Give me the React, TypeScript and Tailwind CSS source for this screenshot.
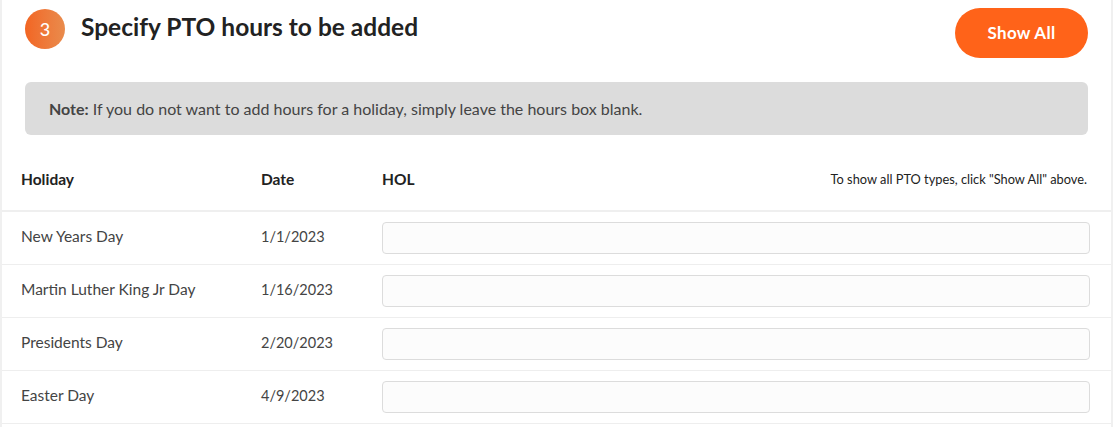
const holidays = [
  { name: "New Years Day", date: "1/1/2023" },
  { name: "Martin Luther King Jr Day", date: "1/16/2023" },
  { name: "Presidents Day", date: "2/20/2023" },
  { name: "Easter Day", date: "4/9/2023" },
];

export default function App() {
  return (
    <div className="w-[1113px] h-[427px] overflow-hidden bg-white font-['Lato','Liberation_Sans',sans-serif]">
      <div className="h-full border-x-2 border-[#f0f0f0] bg-white">
        {/* Step header */}
        <div className="flex items-start justify-between pl-[23px] pr-[23px] pt-[8px]">
          <div className="flex items-center gap-[16px] pt-[1px]">
            <div className="w-[40px] h-[40px] rounded-full bg-gradient-to-r from-[#f26522] to-[#e98b4c] flex items-center justify-center text-white text-[18px] font-medium">
              3
            </div>
            <h2 className="text-[24.5px] font-bold text-[#222] -mt-[3px]">
              Specify PTO hours to be added
            </h2>
          </div>
          <button className="w-[133px] h-[50px] rounded-full bg-[#ff6319] text-white text-[17px] font-bold tracking-[0.3px]">
            Show All
          </button>
        </div>

        {/* Note */}
        <div className="mx-[23px] mt-[24px] h-[53px] rounded-[6px] bg-[#dcdcdc] flex items-center px-[24px] text-[16px] text-[#444]">
          <span>
            <span className="font-bold">Note:</span> If you do not want to add hours for a holiday, simply leave the hours box blank.
          </span>
        </div>

        {/* Table */}
        <div className="mt-[15px]">
          <div className="h-[62px] flex items-center border-b-2 border-[#efefef] pl-[19px] pr-[24px] text-[15.5px] font-bold text-[#222]">
            <div className="w-[240px]">Holiday</div>
            <div className="w-[121px]">Date</div>
            <div className="flex-1">HOL</div>
            <div className="text-[12.8px] font-normal text-[#222]">
              To show all PTO types, click "Show All" above.
            </div>
          </div>
          {holidays.map((h) => (
            <div
              key={h.name}
              className="h-[53px] flex items-center border-b border-[#eeeeee] pl-[19px] pr-[21px] text-[15.5px] text-[#444]"
            >
              <div className="w-[240px] -mt-[2px]">{h.name}</div>
              <div className="w-[121px] text-[14.5px] -mt-[2px]">{h.date}</div>
              <input
                type="text"
                className="flex-1 h-[32px] rounded-[4px] border border-[#dcdcdc] bg-[#fcfcfc] outline-none"
              />
            </div>
          ))}
        </div>
      </div>
    </div>
  );
}
